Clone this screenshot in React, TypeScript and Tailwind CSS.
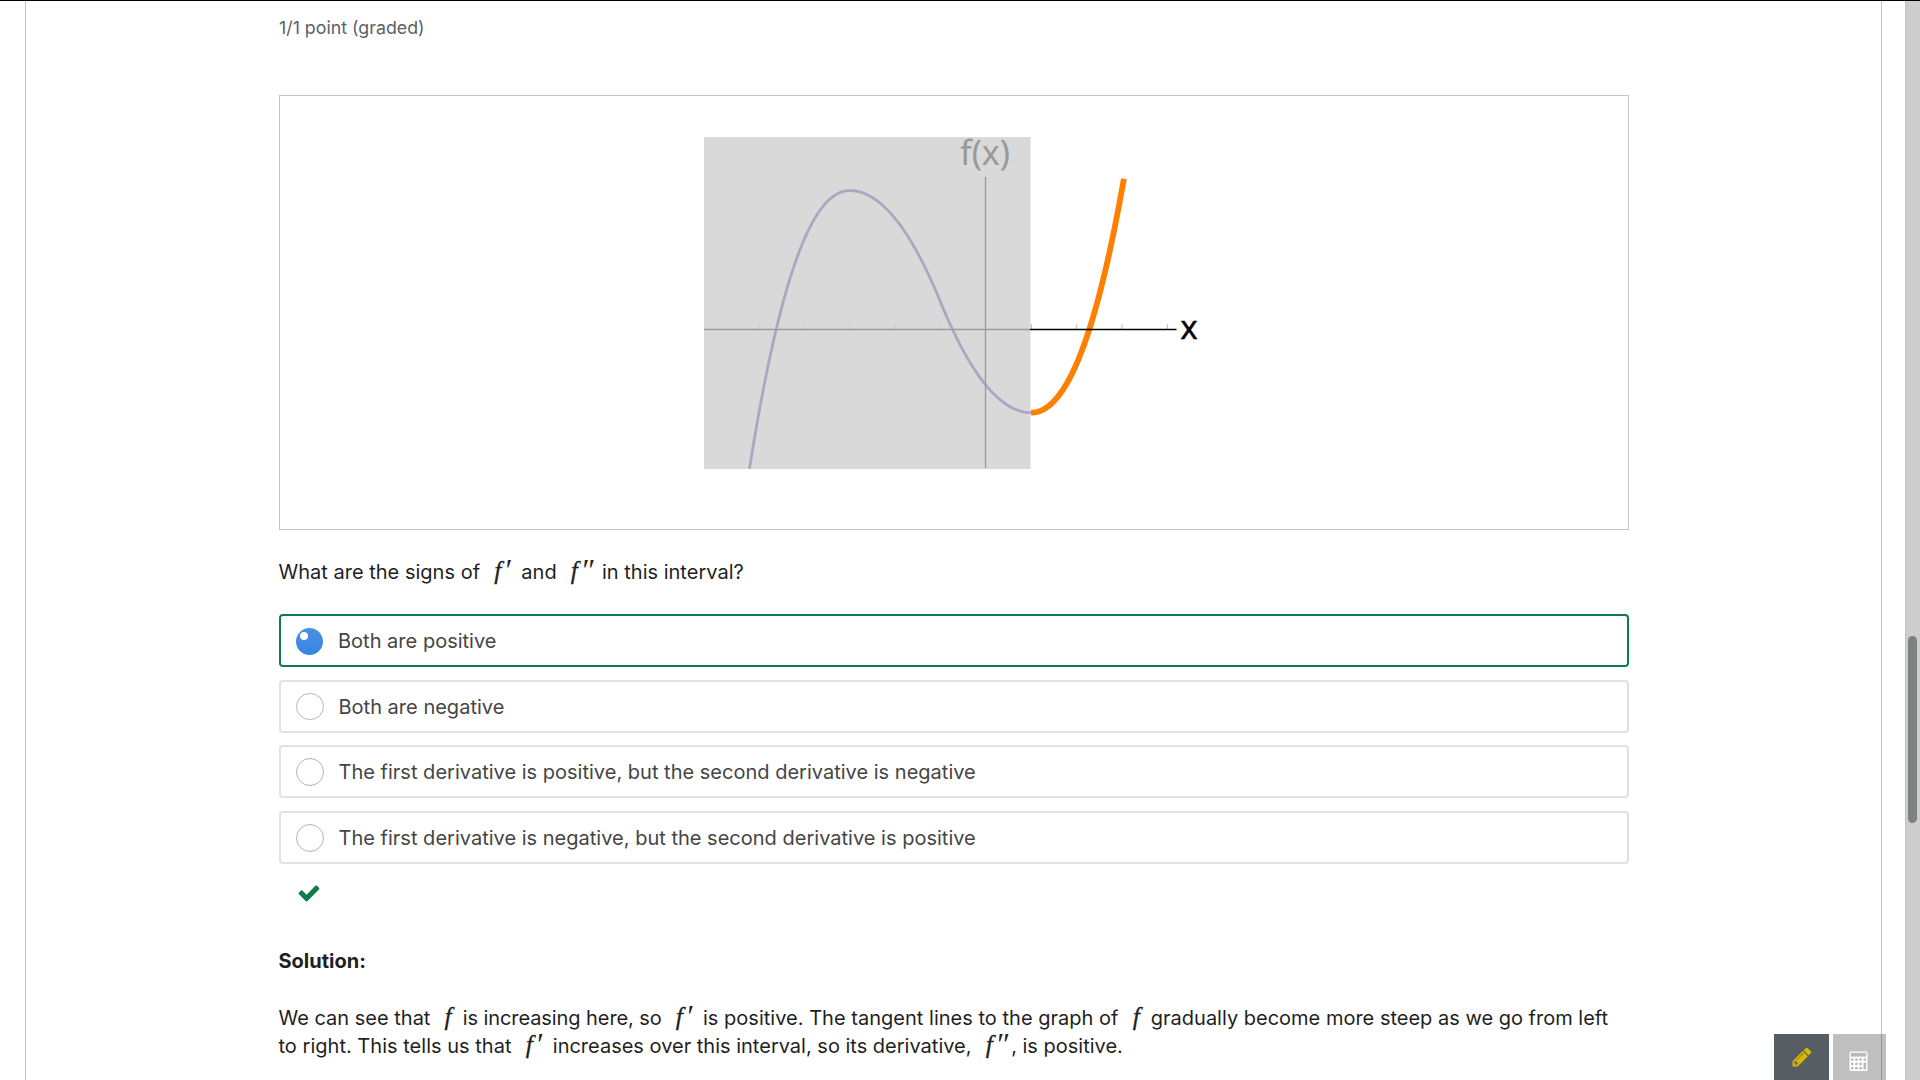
import type { ReactNode } from "react";

const STEP = 45.35;
const ORIGIN_X = 282;
const K = 20.82;

// Height of the curve in pixels below its local maximum at t = -3.
function drop(t: number): number {
  if (t < -3 || t > 1) {
    return K * (9 - (t * t * t) / 3 - t * t + 3 * t);
  }
  if (t <= -1) return 27.76 * (t + 3) ** 2;
  return 222.1 - 27.76 * (t - 1) ** 2;
}

function curve(from: number, to: number): string {
  const n = 80;
  const pts: string[] = [];
  for (let i = 0; i <= n; i++) {
    const t = from + ((to - from) * i) / n;
    pts.push(`${(ORIGIN_X - 0.3 + t * STEP).toFixed(2)},${(53.6 + drop(t)).toFixed(2)}`);
  }
  return pts.join(" ");
}

function Graph() {
  return (
    <svg width="500" height="333" viewBox="0 0 500 333" className="block overflow-visible">
      <rect x="0" y="0" width="326.5" height="332" fill="#d9d9d9" />
      <g stroke="#c9c9c9" strokeWidth="1">
        {[-5, -4, -3, -2, -1].map((t) => (
          <line key={t} x1={ORIGIN_X + t * STEP} x2={ORIGIN_X + t * STEP} y1="187" y2="192" />
        ))}
      </g>
      <g stroke="#bcbcbc" strokeWidth="1">
        {[1, 2, 3, 4].map((t) => (
          <line key={t} x1={ORIGIN_X + t * STEP} x2={ORIGIN_X + t * STEP} y1="187" y2="192" />
        ))}
      </g>
      <polyline points={curve(-5.21, 1)} fill="none" stroke="#aaa8c1" strokeWidth="2.8" />
      <line x1="281.5" x2="281.5" y1="40" y2="331" stroke="#999" strokeWidth="1.3" />
      <line x1="0" x2="326" y1="192.5" y2="192.5" stroke="#9c9c9c" strokeWidth="1.6" />
      <polyline points={curve(1, 3.047)} fill="none" stroke="#ff8000" strokeWidth="5.8" />
      <line x1="326" x2="472.5" y1="192.5" y2="192.5" stroke="#000" strokeWidth="1.3" />
      <text x="256" y="28" fontSize="34" textLength="50" fill="#999" fontFamily="Noto Sans, sans-serif">
        f(x)
      </text>
      <text x="476.3" y="202" fontSize="33" fill="#000" stroke="#000" strokeWidth="0.4" fontFamily="Noto Sans, sans-serif">
        x
      </text>
    </svg>
  );
}

function F({ primes = 0 }: { primes?: 0 | 1 | 2 }) {
  const width = primes === 2 ? "w-[34px]" : primes === 1 ? "w-[30px]" : "w-[21px]";
  return (
    <span className={`inline-flex h-[20px] items-baseline pl-[8.5px] font-['Liberation_Serif',serif] text-[25.5px] leading-[20px] italic tracking-normal ${width}`}>
      <span className="[-webkit-text-stroke:0.3px_currentColor]">f</span>
      {primes > 0 && (
        <span className="relative top-[2px] ml-[2.5px] text-[31px] leading-[20px] tracking-[-2.5px]">
          {primes === 2 ? "″" : "′"}
        </span>
      )}
    </span>
  );
}

function Option({ label, checked = false }: { label: ReactNode; checked?: boolean }) {
  return (
    <label
      className={`flex h-[53px] items-center rounded-[4px] border-2 pt-px pl-[15px] ${
        checked ? "border-[#0d7d4d]" : "border-[#e2e2e2]"
      }`}
    >
      {checked ? (
        <span className="flex size-[27px] rounded-full bg-linear-to-b from-[#4b91e2] to-[#3584e4] pt-1 pl-1">
          <span className="size-2 rounded-full bg-white" />
        </span>
      ) : (
        <span className="size-[27.5px] rounded-full border border-[#b9b3ad]" />
      )}
      <span className="ml-[15px] tracking-[0.01px] text-[#454545]">{label}</span>
    </label>
  );
}

function PencilIcon() {
  return (
    <svg width="22" height="22" viewBox="0 0 1792 1792" fill="#d6b600">
      <path d="M491 1536l91-91-235-235-91 91v107h128v128h107zm523-928q0-22-22-22-10 0-17 7l-542 542q-7 7-7 17 0 22 22 22 10 0 17-7l542-542q7-7 7-17zm-54-192l416 416-832 832h-416v-416zm683 96q0 53-37 90l-166 166-416-416 166-165q36-38 90-38 53 0 91 38l235 234q37 39 37 91z" />
    </svg>
  );
}

function CalculatorIcon() {
  return (
    <svg width="19" height="21" viewBox="0 0 19 21">
      <rect x="0.5" y="0.5" width="18" height="19.5" rx="1.5" fill="#fff" />
      <g fill="#b9b9b9">
        <rect x="1.8" y="1.8" width="15.4" height="3.8" />
        {[8.6, 12.9, 17.2].map((y) =>
          [3.2, 7.4, 11.6].map((x) => <circle key={`${x}-${y}`} cx={x} cy={y} r="1.35" />),
        )}
        <circle cx="15.8" cy="8.6" r="1.35" />
        <rect x="14.5" y="11.6" width="2.6" height="7" rx="1.2" />
      </g>
    </svg>
  );
}

export default function App() {
  return (
    <div className="relative flex h-[1080px] w-[1920px] overflow-hidden border-t border-black bg-white font-['Inter',sans-serif] text-[20px] leading-7 text-[#1f1f1f]">
      <main className="ml-[25px] w-[1857px] border-x border-[#c3c3c3] pl-[253px]">
        <div className="w-[1350px]">
          <p className="pt-[13px] text-[17.8px] text-[#5c6166]">1/1 point (graded)</p>
          <div className="mt-[53px] h-[435px] border border-[#c4c4c4] pt-[41px] pl-[424px]">
            <Graph />
          </div>
          <p className="mt-[28px] -ml-[0.5px] tracking-[0.01px] whitespace-nowrap">
            What are the signs of <F primes={1} /> and <F primes={2} /> in this interval?
          </p>
          <div className="mt-[28px] flex flex-col gap-[12.6px]">
            <Option label="Both are positive" checked />
            <Option label="Both are negative" />
            <Option label="The first derivative is positive, but the second derivative is negative" />
            <Option label="The first derivative is negative, but the second derivative is positive" />
          </div>
          <svg width="24" height="24" viewBox="0 0 1792 1792" className="mt-[17px] ml-[18.4px] block">
            <path
              fill="#0d7d4d"
              d="M1671 566q0 40-28 68l-724 724-136 136q-28 28-68 28t-68-28l-136-136-362-362q-28-28-28-68t28-68l136-136q28-28 68-28t68 28l294 295 656-657q28-28 68-28t68 28l136 136q28 28 28 68z"
            />
          </svg>
          <p className="mt-[42px] -ml-[0.5px] font-bold">Solution:</p>
          <p className="mt-[29px] -ml-[0.5px] whitespace-nowrap">
            We can see that <F /> <span className="tracking-[-0.08px]">is increasing here, so</span> <F primes={1} /> <span className="tracking-[0.02px]">is positive. The tangent lines to the graph of</span> <F /> gradually become more steep as we go from left
            <br />
            <span className="tracking-[0.02px]">to right. This tells us that</span> <F primes={1} /> increases over this interval, so its derivative, <F primes={2} />, is positive.
          </p>
        </div>
      </main>
      <div className="ml-auto w-[15px] border-l border-[#c2c2c2] bg-[#cdcdcd] pt-[635px] pl-[2px]">
        <div className="h-[187px] w-[9px] rounded-full bg-[#7e8182]" />
      </div>
      <div className="absolute right-[34px] bottom-0 flex h-[46px] gap-1">
        <button className="flex w-[55px] justify-center bg-[#575e63] pt-[12px]">
          <PencilIcon />
        </button>
        <button className="flex w-[53px] bg-black/25 pt-[17px] pl-[16px]">
          <CalculatorIcon />
        </button>
      </div>
    </div>
  );
}
